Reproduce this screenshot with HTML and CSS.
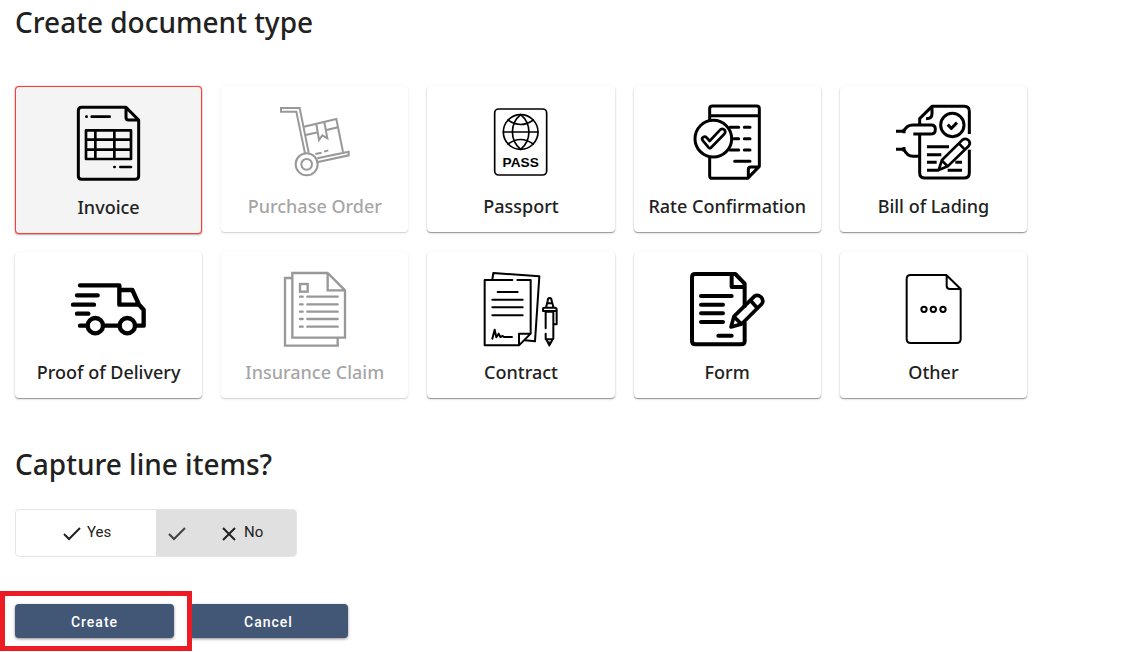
FILE: index.html
```html
<!DOCTYPE html>
<html lang="en">
<head>
<meta charset="utf-8">
<meta name="viewport" content="width=device-width, initial-scale=1">
<title>Create document type</title>
<link rel="stylesheet" href="styles.css">
</head>
<body>
<main class="page">
  <h1 class="heading">Create document type</h1>

  <div class="types">
    <button type="button" class="card card-selected" aria-pressed="true">
      <svg class="card-icon" viewBox="213 90 225 225" stroke-width="9" aria-hidden="true">
        <path d="M378 94H245Q235 94 235 104V300Q235 310 245 310H406Q416 310 416 300V132ZM378 96V124Q378 132 386 132H414"/>
        <path stroke-width="8" d="M259 122h1M275 122H329M343 273h1M361 273H393"/>
        <path stroke-width="8" d="M258 163H393V249H258ZM258 191H393M258 221H393M286 163V249M343 163V249"/>
      </svg>
      <span>Invoice</span>
    </button>
    <button type="button" class="card" disabled>
      <svg class="card-icon" viewBox="200 87 225 225" stroke-width="6" aria-hidden="true">
        <g stroke-linejoin="miter" stroke-linecap="butt">
          <path d="M284 232L258 107H212V96H268L295 230"/>
          <path d="M281 152L378 129L398 228M286 177L323 169M345 163L383 154M318 144L326 192L336 178L351 187L342 139"/>
          <path d="M321 247L415 227V238L323 258M315 234L334 230M341 227L354 223"/>
          <circle cx="289" cy="265" r="33"/><circle cx="289" cy="265" r="16"/>
        </g>
      </svg>
      <span>Purchase Order</span>
    </button>
    <button type="button" class="card">
      <svg class="card-icon" viewBox="190 86 225 225" stroke-width="5" aria-hidden="true">
        <rect x="225" y="98" width="156" height="198" rx="12"/>
        <circle cx="303" cy="167" r="52"/>
        <path d="M251 167H355M303 115C270 142 270 192 303 219C336 192 336 142 303 115M265 131Q303 158 341 131M265 203Q303 176 341 203"/>
        <text class="pass-text" x="303" y="271" text-anchor="middle">PASS</text>
      </svg>
      <span>Passport</span>
    </button>
    <button type="button" class="card">
      <svg class="card-icon" viewBox="195 86 225 225" stroke-width="9" aria-hidden="true">
        <path d="M254 130V97Q254 89 262 89H395Q403 89 403 97V270L368 306H262Q254 306 254 298V242M254 118H403M370 303V280Q370 272 378 272H402"/>
        <circle cx="265" cy="187" r="55"/>
        <path stroke-width="8" d="M233 192Q229 187 234 183Q240 179 245 184L254 194L286 160Q293 155 299 161Q303 167 298 173L257 215Q254 217 251 214Z"/>
        <path d="M315 153H341M358 153H375M326 187H341M358 187H375M315 221H341M358 221H375M329 255H375"/>
      </svg>
      <span>Rate Confirmation</span>
    </button>
    <button type="button" class="card">
      <svg class="card-icon icon-butt" viewBox="198 86 225 225" stroke-width="9" aria-hidden="true">
        <path d="M269 145V127L306 90H403Q418 90 418 105V173M418 220V289Q418 305 402 305H285Q269 305 269 289V172M306 92V112Q306 127 288 127"/>
        <circle cx="367" cy="146" r="35"/>
        <path d="M353 145L364 156L381 139"/>
        <path d="M198 165H222Q229 146 249 146H304Q316 146 316 159Q316 173 304 173H250M222 157V171M198 219H222Q230 240 250 240H268M222 212V226"/>
        <path d="M291 211H357M291 235H334M291 258H320M376 258H396M291 282H326M353 282H396"/>
        <path stroke-width="8" d="M326 281L336 251L398 190Q408 184 416 192Q423 200 416 209L353 270ZM387 202L404 219M336 253L352 269"/>
      </svg>
      <span>Bill of Lading</span>
    </button>

    <button type="button" class="card">
      <svg class="card-icon" viewBox="213 78 225 225" stroke-width="13" aria-hidden="true">
        <path d="M240 121H358V179H417M358 135H397L417 179L431 194V242H407M310 242H358M240 242H262M231 151H293M219 179H282M231 206H265"/>
        <circle cx="286" cy="242" r="23"/><circle cx="382" cy="242" r="23"/>
      </svg>
      <span>Proof of Delivery</span>
    </button>
    <button type="button" class="card" disabled>
      <svg class="card-icon" viewBox="200 78 225 225" stroke-width="7" aria-hidden="true">
        <g stroke-linejoin="miter">
          <path d="M246 99H224V302H382V280M352 84H246V278H404V136ZM352 84V136H404"/>
          <rect x="269" y="117" width="23" height="23"/>
        </g>
        <path d="M269 155H277M291 155H382M269 178H277M291 178H382M269 200H277M291 200H382M269 222H277M291 222H382M269 245H277M291 245H382"/>
      </svg>
      <span>Insurance Claim</span>
    </button>
    <button type="button" class="card">
      <svg class="card-icon" viewBox="190 78 225 225" stroke-width="6" aria-hidden="true">
        <path d="M278 105H195V301H298L333 266V105H293M298 299V266H331M218 103L221 84L359 94L346 289L316 286"/>
        <path d="M234 141H294M218 164H309M218 187H309M218 211H309M218 281L225 254L230 277L237 266L242 276L249 273L253 276H277"/>
        <path d="M378 250V200H401V280L389 301L378 280V266M379 188L384 168Q384 159 390 159Q396 159 396 168L402 188M382 175H398M370 198V192Q370 188 375 188H405Q411 188 411 194V238H404M370 198H409M378 283H400M388 292V298"/>
      </svg>
      <span>Contract</span>
    </button>
    <button type="button" class="card">
      <svg class="card-icon" viewBox="195 78 225 225" stroke-width="12" aria-hidden="true">
        <path d="M359 184V116L331 87H211Q201 87 201 97V288Q201 298 211 298H349Q359 298 359 288V234M320 89V126H357M228 153H320M228 179H294M228 205H294M228 231H294M280 272H320"/>
        <path stroke-width="11" d="M318 246L327 214L388 154Q398 147 408 156Q418 167 410 177L350 237ZM376 166L396 188M328 216L347 235"/>
      </svg>
      <span>Form</span>
    </button>
    <button type="button" class="card">
      <svg class="card-icon" viewBox="198 78 225 225" stroke-width="6" aria-hidden="true">
        <path d="M349 90H242Q230 90 230 102V282Q230 294 242 294H380Q392 294 392 282V132ZM350 91V122Q350 132 360 132H391"/>
        <circle cx="282" cy="193" r="8"/><circle cx="310" cy="193" r="8"/><circle cx="339" cy="193" r="8"/>
      </svg>
      <span>Other</span>
    </button>
  </div>

  <h2 class="heading" id="capture">Capture line items?</h2>
  <div class="toggle" role="radiogroup" aria-labelledby="capture">
    <label class="option option-yes">
      <input type="radio" name="lines" class="option-input">
      <svg class="mark" viewBox="0 0 18 18" aria-hidden="true"><path d="M1 10L6 15L17 4"/></svg>
      <span>Yes</span>
    </label>
    <label class="option option-no">
      <input type="radio" name="lines" class="option-input" checked>
      <svg class="mark mark-current" viewBox="0 0 18 18" aria-hidden="true"><path d="M1 10L6 15L17 4"/></svg>
      <svg class="mark" viewBox="0 0 18 18" aria-hidden="true"><path d="M3 4L15 16M15 4L3 16"/></svg>
      <span>No</span>
    </label>
  </div>

  <div class="actions">
    <div class="highlighted"><button type="button" class="action">Create</button></div>
    <button type="button" class="action">Cancel</button>
  </div>
</main>
</body>
</html>
```

FILE: styles.css
```css
* { box-sizing: border-box; }

body {
  margin: 0;
  background: #fff;
  color: #212121;
  font-family: "Noto Sans", sans-serif;
}

.page {
  max-width: 1042px;
  padding: 2px 15px 14px;
}

.heading {
  margin: 0;
  font-size: 28px;
  font-weight: 500;
  line-height: 40px;
}

.types {
  display: grid;
  grid-template-columns: repeat(5, 1fr);
  align-items: start;
  gap: 18px 19px;
  margin: 44px 0 46px;
}

.card {
  display: flex;
  flex-direction: column;
  align-items: center;
  gap: 14px;
  padding: 19px 0 14px;
  border: 0;
  border-radius: 4px;
  background: #fff;
  box-shadow: 0 1px 1px rgba(0, 0, 0, 0.35), 0 1px 3px rgba(0, 0, 0, 0.15);
  color: #212121;
  font: 500 18px/24px "Noto Sans", sans-serif;
  white-space: nowrap;
}

.card-selected {
  border: 1px solid #f44336;
  background: #f4f4f4;
  box-shadow: 0 0 1px #f44336, 0 1px 2px rgba(0, 0, 0, 0.3);
}

.card:disabled {
  opacity: 0.4;
  color: #212121;
}

.card-icon {
  width: 75px;
  height: 75px;
  fill: none;
  stroke: #000;
  stroke-linecap: round;
  stroke-linejoin: round;
  overflow: visible;
}

.icon-butt { stroke-linecap: butt; }

.pass-text {
  fill: #000;
  stroke: none;
  font: bold 41px "Liberation Sans", Arial, sans-serif;
}

.toggle {
  display: grid;
  grid-template-columns: 1fr 1fr;
  width: 282px;
  height: 48px;
  margin-top: 25px;
  overflow: hidden;
  border: 1px solid #e6e6e6;
  border-radius: 4px;
  font: 15px/44px Roboto, sans-serif;
}

.option {
  position: relative;
  display: flex;
}

.option-yes { gap: 6px; padding-left: 47px; }
.option-no { gap: 6px; padding-left: 12px; background: #e0e0e0; }

.option-input {
  position: absolute;
  inset: 0;
  margin: 0;
  opacity: 0;
}

.mark {
  width: 18px;
  height: 18px;
  margin-top: 14px;
  fill: none;
  stroke: #212121;
  stroke-width: 2;
}

.mark-current {
  margin-right: 28px;
  stroke: #424242;
}

.actions {
  display: flex;
  gap: 15px;
  margin-top: 47px;
}

.highlighted { position: relative; }

.highlighted::after {
  content: "";
  position: absolute;
  z-index: 1;
  inset: -13px -18px -13px -15px;
  border: 5px solid #ed1c24;
  pointer-events: none;
}

.action {
  width: 159px;
  height: 34px;
  border: 0;
  border-radius: 4px;
  background: #425676;
  box-shadow: 0 1px 3px rgba(0, 0, 0, 0.45);
  color: #fff;
  font: 500 14px/34px Roboto, sans-serif;
  letter-spacing: 1px;
}
```
